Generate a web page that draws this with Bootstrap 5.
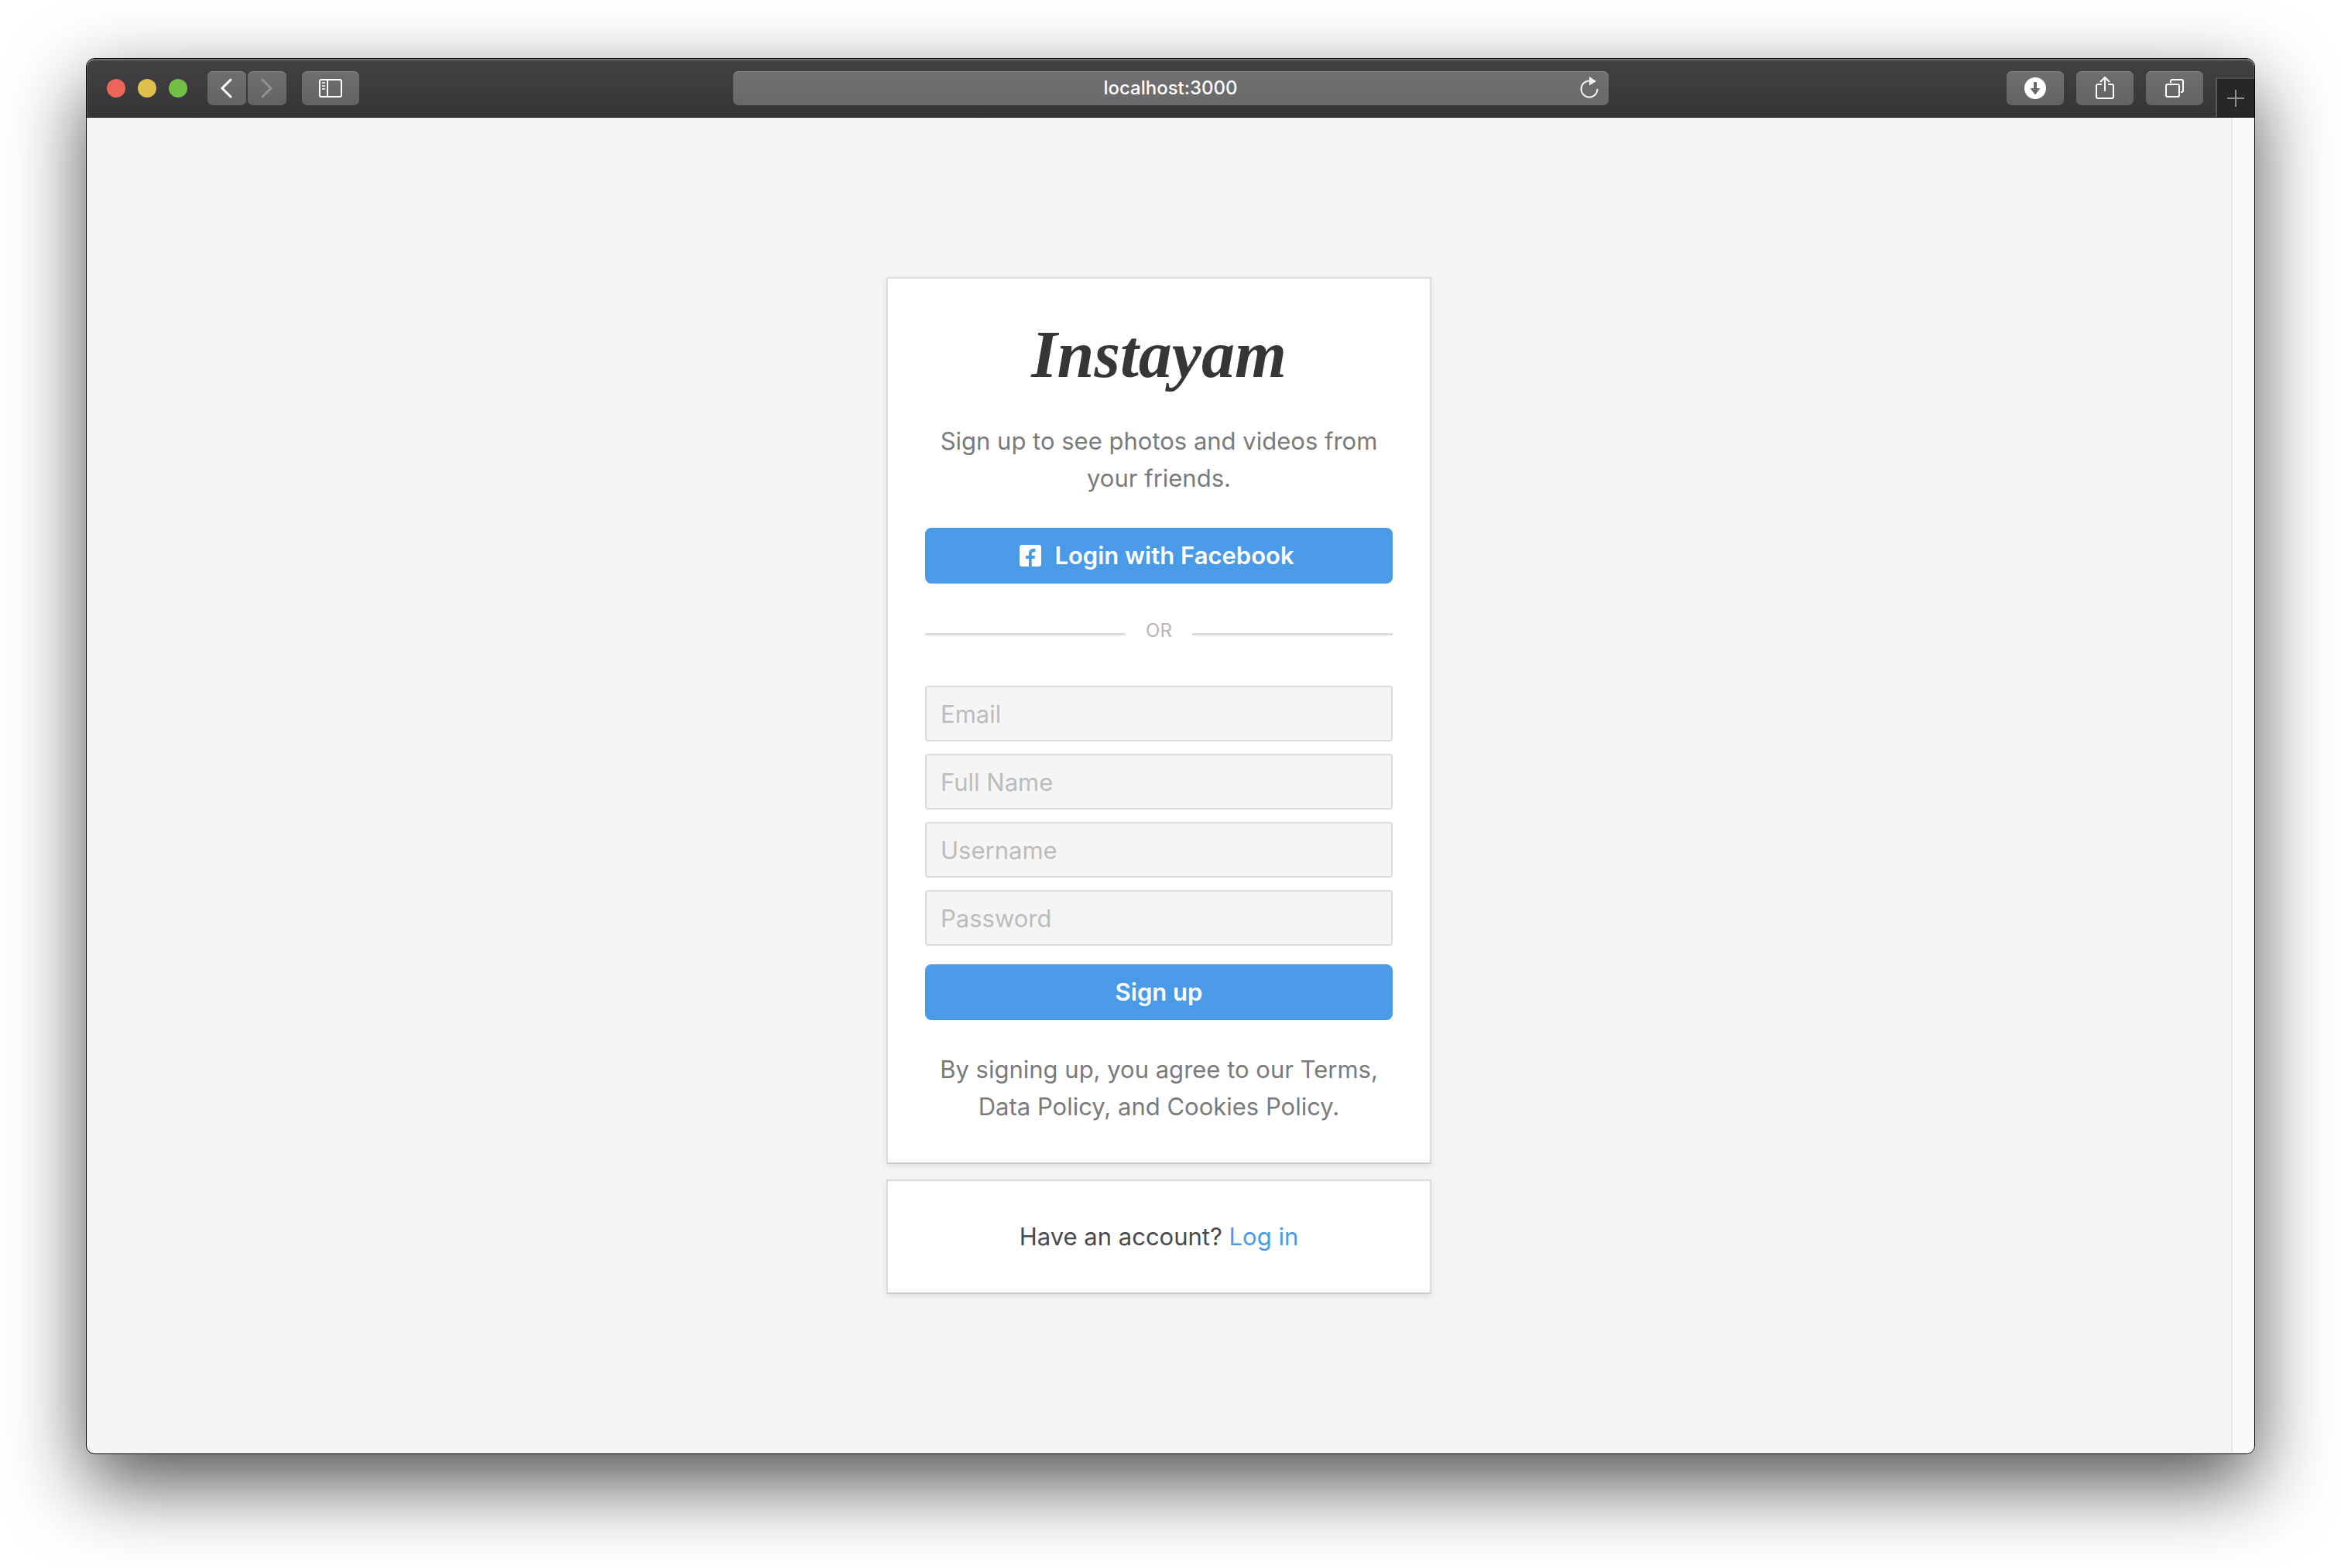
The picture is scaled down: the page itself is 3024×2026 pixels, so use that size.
<!DOCTYPE html>
<html lang="en">
<head>
<meta charset="utf-8">
<meta name="viewport" content="width=device-width, initial-scale=1">
<title>Instayam</title>
<link href="https://cdn.jsdelivr.net/npm/bootstrap@5.3.0/dist/css/bootstrap.min.css" rel="stylesheet">
<style>
  body { font-family: Inter, "Liberation Sans", sans-serif; font-size: 31px; line-height: 48px; color: #4a4a4a; background: #fff; }
  .desktop { padding: 75px 111px 147px; }
  .browser { border: 1px solid #000; border-radius: 11px; background: #f5f5f5; box-shadow: 0 38px 100px rgba(0,0,0,.68); }

  /* browser toolbar */
  .toolbar { display: grid; grid-template-columns: 1fr minmax(200px, 1131px) 1fr; height: 76px; background: linear-gradient(#434144, #363437); border-bottom: 1px solid #000; box-shadow: inset 0 2px #727174, inset 1px 0 #5c5b5e, inset -1px 0 #5c5b5e; border-radius: 10px 10px 0 0; }
  .light { width: 24px; height: 24px; border-radius: 50%; }
  .light-close { background: #ec6559; }
  .light-min { background: #e0c04c; }
  .light-zoom { background: #71bf46; }
  .lights { gap: 16px; padding-left: 26px; margin-right: 26px; }
  .tool { width: 74px; height: 44px; padding: 0; border: 0; border-radius: 7px; background: linear-gradient(#6f6e71, #636265); box-shadow: inset 0 1px #858487; color: #fff; display: flex; align-items: center; justify-content: center; }
  .tool-nav { width: 50px; }
  .tool-off { color: #929194; }
  .nav-pair { gap: 2px; margin-right: 20px; }
  .address { height: 44px; padding: 0 44px; border: 0; border-radius: 7px; background: linear-gradient(#707072, #69686b); box-shadow: inset 0 1px #8a898c; color: #fff; font-size: 24px; font-weight: 500; text-align: center; }
  .reload { right: 8px; top: 0; height: 100%; padding: 0; border: 0; background: none; color: #f0f0f0; }
  .new-tab { width: 50px; height: 51px; padding: 0; border: 0; border-left: 2px solid #5a595c; border-top: 2px solid #4e4d50; background: #272628; color: #8f8e91; }
  .actions { gap: 16px; }
  svg { display: block; fill: none; stroke: currentColor; }

  /* page */
  .scroll-track { width: 30px; border-left: 2px solid #e7e7e7; background: #fafafa; border-radius: 0 0 10px 0; }
  .signup { max-width: 704px; gap: 20px; }
  .panel { border: 2px solid #dbdbdb; border-bottom-color: #cbcbcb; background: #fff; padding: 48px; box-shadow: 0 3px 8px rgba(0,0,0,.09); text-align: center; }
  .brand { margin: 0 0 38px; font: italic 700 86px/100px "Liberation Serif", serif; color: #363636; }
  .muted { color: #7a7a7a; margin: 0; }
  .action { height: 72px; padding: 0; border: 0; border-radius: 8px; background: #4b9ae8; color: #fff; font-size: 31px; font-weight: 600; gap: 16px; }
  .action:hover { background: #3f8fdd; color: #fff; }
  .facebook { margin-top: 40px; padding-right: 6px; }
  .divider { height: 130px; margin-bottom: 2px; gap: 26px; font-size: 24px; color: #b5b5b5; }
  .rule { height: 3px; background: #dbdbdb; }
  .field { height: 72px; padding: 0 18px; border: 2px solid #dbdbdb; border-radius: 4px; background: #f5f5f5; font-size: 31px; }
  .field::placeholder { color: #bcbcbc; }
  .fields { gap: 16px; margin-bottom: 24px; }
  .terms { margin-top: 40px; }
  .login { color: #4b9ae8; text-decoration: none; }
</style>
</head>
<body>
<div class="desktop min-vh-100 d-flex">
  <div class="browser flex-fill d-flex flex-column">
    <header class="toolbar">
      <div class="d-flex align-items-center">
        <div class="lights d-flex">
          <span class="light light-close"></span><span class="light light-min"></span><span class="light light-zoom"></span>
        </div>
        <div class="nav-pair d-flex">
          <button class="tool tool-nav" type="button" aria-label="Back"><svg width="20" height="28" stroke-width="3" stroke-linecap="round"><path d="M15 3 4 14l11 11"/></svg></button>
          <button class="tool tool-nav tool-off" type="button" aria-label="Forward"><svg width="20" height="28" stroke-width="3" stroke-linecap="round"><path d="M4 3l11 11L4 25"/></svg></button>
        </div>
        <button class="tool" type="button" aria-label="Show sidebar"><svg width="30" height="24" stroke-width="2"><rect x="1" y="1" width="28" height="22" rx="2"/><path d="M11 1v22"/><path d="M4 5h4M4 9h4M4 13h4" opacity=".75"/></svg></button>
      </div>
      <div class="position-relative align-self-center">
        <input class="address form-control" type="text" value="localhost:3000" aria-label="Address">
        <button class="reload position-absolute" type="button" aria-label="Reload"><svg width="30" height="30" stroke-width="2"><path d="M13 5.500A10.500 10.500 0 1 0 23.500 16"/><path d="M13 0l9 6-9 5.500z" fill="currentColor" stroke="none"/></svg></button>
      </div>
      <div class="d-flex align-items-center justify-content-end">
        <div class="actions d-flex me-3">
          <button class="tool" type="button" aria-label="Downloads"><svg width="28" height="28" stroke="none"><path fill="#fff" fill-rule="evenodd" stroke="none" d="M14 0a14 14 0 1 1 0 28a14 14 0 0 1 0-28zM12 6v8H7.500L14 22.500 20.500 14H16V6z"/></svg></button>
          <button class="tool" type="button" aria-label="Share"><svg width="24" height="32" stroke-width="2"><path d="M8 11H3q-2 0-2 2v14q0 2 2 2h18q2 0 2-2V13q0-2-2-2h-5M12 20V2M6 8l6-6 6 6"/></svg></button>
          <button class="tool" type="button" aria-label="Show tabs"><svg width="24" height="24" stroke-width="2"><rect x="1" y="7" width="17" height="16" rx="2"/><path d="M7 5V3q0-2 2-2h12q2 0 2 2v12q0 2-2 2h-1"/></svg></button>
        </div>
        <button class="new-tab align-self-end d-flex align-items-center justify-content-center" type="button" aria-label="New tab"><svg width="22" height="22" stroke-width="2"><path d="M11 0v22M0 11h22"/></svg></button>
      </div>
    </header>
    <div class="flex-fill d-flex">
      <main class="flex-fill d-flex justify-content-center align-items-center">
        <div class="signup w-100 d-flex flex-column">
          <section class="panel">
            <h1 class="brand">Instayam</h1>
            <p class="muted">Sign up to see photos and videos from your friends.</p>
            <button class="action facebook btn w-100 d-flex align-items-center justify-content-center" type="button">
              <svg width="30" height="28" viewBox="0 0 30 28"><path fill="#fff" stroke="none" d="M4 0h22q3 0 3 3v22q0 3-3 3h-9.300V18h3.700l.8-4h-4.500v-2.500q0-2.500 2.600-2.500h2.200V5.300Q20.500 5 18.800 5q-5.800 0-5.800 6v3H9v4h4v10H4q-3 0-3-3V3q0-3 3-3z"/></svg>
              Login with Facebook
            </button>
            <div class="divider d-flex align-items-center"><span class="rule flex-fill"></span><span class="pb-2">OR</span><span class="rule flex-fill"></span></div>
            <form>
              <div class="fields d-flex flex-column">
                <input class="field form-control" type="email" placeholder="Email" aria-label="Email">
                <input class="field form-control" type="text" placeholder="Full Name" aria-label="Full Name">
                <input class="field form-control" type="text" placeholder="Username" aria-label="Username">
                <input class="field form-control" type="password" placeholder="Password" aria-label="Password">
              </div>
              <button class="action btn w-100" type="submit">Sign up</button>
            </form>
            <p class="muted terms">By signing up, you agree to our Terms, Data Policy, and Cookies Policy.</p>
          </section>
          <section class="panel">Have an account? <a class="login" href="#">Log in</a></section>
        </div>
      </main>
      <div class="scroll-track"></div>
    </div>
  </div>
</div>
<script src="https://cdn.jsdelivr.net/npm/bootstrap@5.3.0/dist/js/bootstrap.bundle.min.js"></script>
</body>
</html>
